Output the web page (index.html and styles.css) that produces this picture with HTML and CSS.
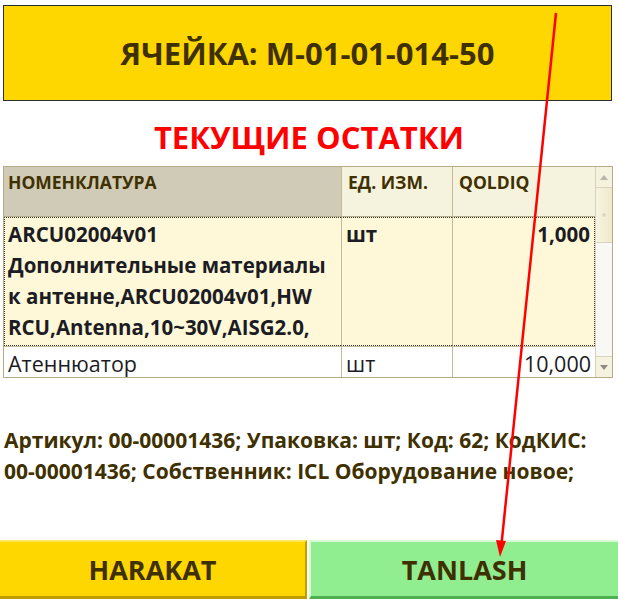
FILE: index.html
```html
<!DOCTYPE html>
<html lang="ru">
<head>
<meta charset="utf-8">
<title>Ячейка</title>
<link rel="stylesheet" href="styles.css">
</head>
<body>
<div class="page">
  <div class="cell-box">ЯЧЕЙКА: М-01-01-014-50</div>
  <div class="title">ТЕКУЩИЕ ОСТАТКИ</div>
  <div class="grid">
    <div class="table">
      <div class="th th-first">НОМЕНКЛАТУРА</div>
      <div class="th">ЕД. ИЗМ.</div>
      <div class="th">QOLDIQ</div>
      <div class="row row-sel">
        <div class="td td-name">ARCU02004v01<br>Дополнительные материалы<br>к антенне,ARCU02004v01,HW<br>RCU,Antenna,10~30V,AISG2.0,</div>
        <div class="td">шт</div>
        <div class="td td-num">1,000</div>
      </div>
      <div class="row row-plain">
        <div class="td">Атеннюатор</div>
        <div class="td">шт</div>
        <div class="td td-num">10,000</div>
      </div>
    </div>
    <div class="scrollbar">
      <div class="sb-btn sb-up"><span class="tri tri-up"></span></div>
      <div class="sb-thumb"><span class="grip"></span></div>
      <div class="sb-track"></div>
      <div class="sb-btn sb-down"><span class="tri tri-down"></span></div>
    </div>
  </div>
  <div class="info">Артикул: 00-00001436; Упаковка: шт; Код: 62; КодКИС:<br>00-00001436; Собственник: ICL Оборудование новое;</div>
  <div class="buttons">
    <div class="btn btn-yellow">HARAKAT</div>
    <div class="btn btn-green">TANLASH</div>
  </div>
  <svg class="arrow" width="618" height="599" viewBox="0 0 618 599">
    <line x1="556" y1="13" x2="501.6" y2="543" stroke="#ff0000" stroke-width="2.5"/>
    <polygon points="500,557 496,540 506,541" fill="#ff0000"/>
  </svg>
</div>
</body>
</html>
```
FILE: styles.css
```css
html, body {
  margin: 0;
  padding: 0;
  background: #ffffff;
}
.page {
  position: relative;
  width: 618px;
  height: 599px;
  overflow: hidden;
  display: flex;
  flex-direction: column;
  font-family: "Open Sans", Lato, sans-serif;
  color: #3f3000;
}
.cell-box {
  margin: 5px 6px 0 3px;
  height: 94px;
  border: 1px solid #2e2e2e;
  background: #ffd700;
  display: flex;
  align-items: center;
  justify-content: center;
  font-weight: bold;
  font-size: 31px;
  color: #3f3000;
}
.title {
  margin-top: 16px;
  height: 49px;
  text-align: center;
  color: #ff0000;
  font-weight: bold;
  font-size: 31px;
  line-height: 40px;
}
.grid {
  margin-left: 3px;
  width: 608px;
  border: 1px solid #b7ab88;
  display: flex;
  height: 210px;
}
.table {
  width: 591px;
  display: grid;
  grid-template-columns: 337px 111px 143px;
  grid-template-rows: 50px 129px 31px;
}
.th {
  background: #f5f2de;
  border-left: 1px solid #c4b998;
  border-bottom: 1px solid #b7ab88;
  font-weight: bold;
  font-size: 17.5px;
  line-height: 24px;
  padding: 3px 0 0 6px;
  color: #3f3000;
}
.th-first {
  background: #cfcbb7;
  border-left: none;
  padding-left: 4px;
}
.row {
  display: contents;
}
.td {
  font-size: 20.5px;
  color: #1c1c24;
  border-left: 1px solid #c4b998;
  padding: 0 4px 0 4px;
  white-space: nowrap;
  overflow: hidden;
}
.row .td:first-child {
  border-left: none;
}
.row-sel .td {
  background: #fff8d8;
  font-weight: bold;
  line-height: 31px;
  padding-top: 1px;
  border-top: 1px dotted #333;
  border-bottom: 1px dotted #333;
  border-left-color: #c4b998;
}
.row-sel .td:first-child {
  border-left: 1px dotted #333;
  padding-left: 3px;
}
.row-sel .td:last-child {
  border-right: 1px dotted #333;
}
.row-plain .td {
  background: #ffffff;
  font-size: 21.5px;
  line-height: 33px;
  border-top: 1px solid #c4b998;
}
.td-num {
  text-align: right;
}
.scrollbar {
  width: 17px;
  display: flex;
  flex-direction: column;
  background: #f6f5ee;
  border-left: 1px solid #d8d2bc;
}
.sb-btn {
  height: 20px;
  background: #f5f2de;
  display: flex;
  align-items: center;
  justify-content: center;
}
.sb-up {
  border-bottom: 1px solid #d8d2bc;
}
.sb-down {
  border-top: 1px solid #d8d2bc;
}
.tri {
  width: 0;
  height: 0;
  border-left: 4px solid transparent;
  border-right: 4px solid transparent;
}
.tri-up {
  border-bottom: 5px solid #b9b6ad;
}
.tri-down {
  border-top: 5px solid #8d8a83;
}
.sb-thumb {
  height: 54px;
  background: linear-gradient(to right, #f7f4e2, #efe9cc);
  border-bottom: 1px solid #d8d2bc;
  display: flex;
  align-items: center;
  justify-content: center;
}
.grip {
  width: 4px;
  height: 4px;
  border-radius: 50%;
  background: #ddd8c6;
}
.sb-track {
  flex: 1;
  background: #f8f8f4;
}
.info {
  margin-top: 47px;
  padding-left: 4px;
  font-weight: bold;
  font-size: 21px;
  line-height: 31px;
  white-space: nowrap;
  color: #3f3000;
}
.buttons {
  margin-top: auto;
  height: 59px;
  display: flex;
  gap: 2px;
}
.btn {
  box-sizing: border-box;
  height: 59px;
  display: flex;
  align-items: center;
  justify-content: center;
  font-weight: bold;
  font-size: 27px;
  color: #3f3000;
}
.btn-yellow {
  width: 307px;
  background: #ffd700;
  border-top: 2px solid #ffe65a;
  border-right: 2px solid #bfa000;
  border-bottom: 3px solid #bf9b00;
}
.btn-green {
  flex: 1;
  background: #90ee90;
  border-top: 2px solid #d8fad8;
  border-left: 2px solid #d8fad8;
  border-bottom: 3px solid #4caf50;
}
.arrow {
  position: absolute;
  left: 0;
  top: 0;
  pointer-events: none;
}
```
